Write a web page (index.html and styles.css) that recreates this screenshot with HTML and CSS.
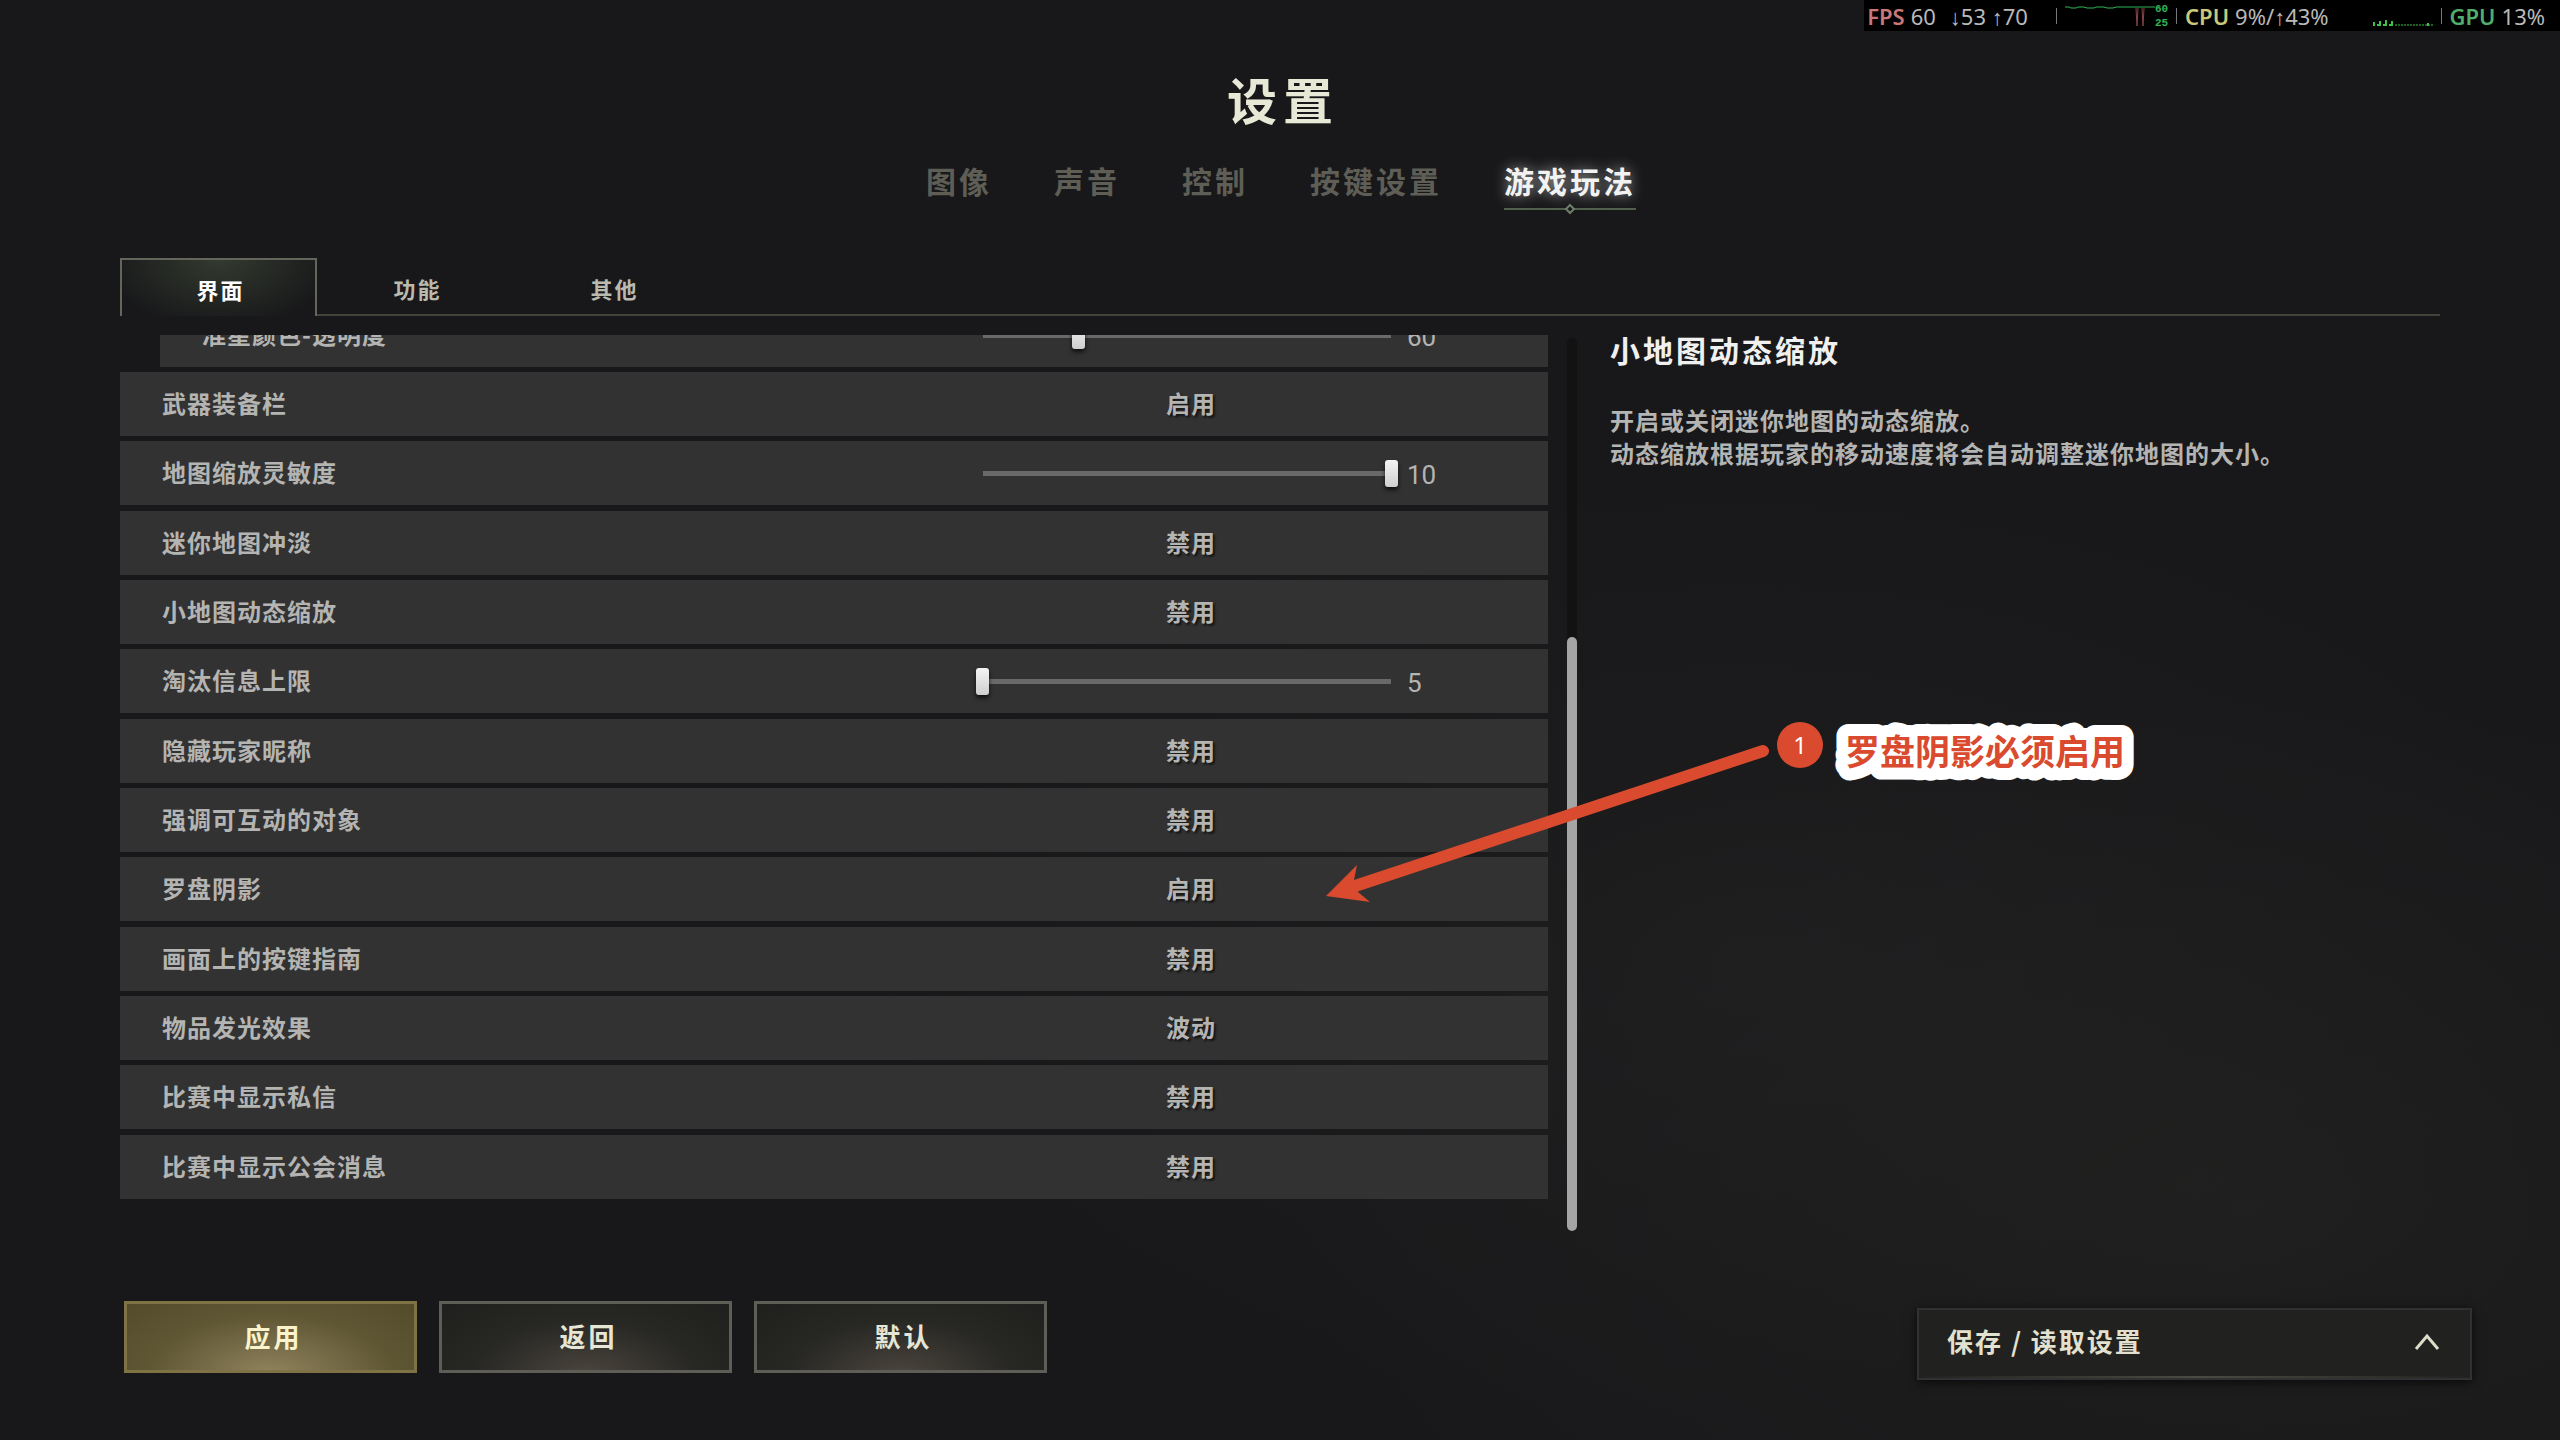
FILE: index.html
```
<!DOCTYPE html>
<html lang="zh-CN">
<head>
    <meta charset="UTF-8">
    <meta name="viewport" content="width=device-width, initial-scale=1.0">
    <title>设置</title>
    <link rel="stylesheet" href="styles.css">
</head>
<body>
    <!-- Performance overlay -->
    <div class="hud">
        <b class="fps">FPS</b><span class="fps-now">60</span>
        <span class="fps-range">↓53 ↑70</span>
        <i class="bar"></i>
        <svg class="fps-graph" width="90" height="26" viewBox="0 0 90 26">
            <path d="M0 4h4l2 1h5l2-1h6l3 1h7l2-1h8l3 1h6l3-1h39" fill="none" stroke="#2fb457" stroke-width="1"/>
            <path d="M71 5l1 18l1-18M77 5l1 18l1-18" fill="none" stroke="#8a4444" stroke-width="1"/>
        </svg>
        <span class="scale"><span>60</span><span>25</span></span>
        <i class="bar"></i>
        <b class="cpu">CPU</b><span class="cpu-now">9%/↑43%</span>
        <svg class="cpu-graph" width="60" height="26" viewBox="0 0 60 26">
            <path d="M1 23v-4M5 23v-2M7 23v-5M11 23v-2M13 23v-6M17 23v-2M19 23v-5M55 23v-3" fill="none" stroke="#3fc04a" stroke-width="2"/>
            <path d="M22 22h38" fill="none" stroke="#3fc04a" stroke-width="1" stroke-dasharray="2 1"/>
        </svg>
        <i class="bar"></i>
        <b class="gpu">GPU</b><span class="gpu-now">13%</span>
    </div>

    <header>
        <h1>设置</h1>
        <nav>
            <a href="#">图像</a>
            <a href="#">声音</a>
            <a href="#">控制</a>
            <a href="#">按键设置</a>
            <a href="#" class="active">游戏玩法
                <svg width="14" height="12" viewBox="0 0 14 12"><path d="M7 2l4 4l-4 4l-4-4z" fill="#18181a" stroke="#6f7d6a" stroke-width="2"/></svg>
            </a>
        </nav>
    </header>

    <main>
        <div class="tabs">
            <button class="tab selected">界面</button>
            <button class="tab">功能</button>
            <button class="tab">其他</button>
        </div>

        <div class="content">
            <div class="scroll">
                <div class="list">
                    <div class="row sub">
                        <label for="alpha">准星颜色-透明度</label>
                        <input type="range" id="alpha" min="0" max="255" value="60">
                        <output for="alpha">60</output>
                    </div>
                    <div class="row">
                        <label for="weapon">武器装备栏</label>
                        <select id="weapon"><option>启用</option><option>禁用</option></select>
                    </div>
                    <div class="row">
                        <label for="mapzoom">地图缩放灵敏度</label>
                        <input type="range" id="mapzoom" min="1" max="10" value="10">
                        <output for="mapzoom">10</output>
                    </div>
                    <div class="row">
                        <label for="fade">迷你地图冲淡</label>
                        <select id="fade"><option>禁用</option><option>启用</option></select>
                    </div>
                    <div class="row">
                        <label for="dynamic">小地图动态缩放</label>
                        <select id="dynamic"><option>禁用</option><option>启用</option></select>
                    </div>
                    <div class="row">
                        <label for="feed">淘汰信息上限</label>
                        <input type="range" id="feed" min="5" max="10" value="5">
                        <output for="feed">5</output>
                    </div>
                    <div class="row">
                        <label for="nick">隐藏玩家昵称</label>
                        <select id="nick"><option>禁用</option><option>启用</option></select>
                    </div>
                    <div class="row">
                        <label for="interact">强调可互动的对象</label>
                        <select id="interact"><option>禁用</option><option>启用</option></select>
                    </div>
                    <div class="row">
                        <label for="compass">罗盘阴影</label>
                        <select id="compass"><option>启用</option><option>禁用</option></select>
                    </div>
                    <div class="row">
                        <label for="keys">画面上的按键指南</label>
                        <select id="keys"><option>禁用</option><option>启用</option></select>
                    </div>
                    <div class="row">
                        <label for="glow">物品发光效果</label>
                        <select id="glow"><option>波动</option><option>禁用</option></select>
                    </div>
                    <div class="row">
                        <label for="whisper">比赛中显示私信</label>
                        <select id="whisper"><option>禁用</option><option>启用</option></select>
                    </div>
                    <div class="row">
                        <label for="clan">比赛中显示公会消息</label>
                        <select id="clan"><option>禁用</option><option>启用</option></select>
                    </div>
                </div>
                <div class="scrollbar"><div class="thumb"></div></div>
            </div>

            <aside>
                <h2>小地图动态缩放</h2>
                <p>开启或关闭迷你地图的动态缩放。<br>动态缩放根据玩家的移动速度将会自动调整迷你地图的大小。</p>
            </aside>
        </div>
    </main>

    <footer>
        <div class="actions">
            <button class="btn apply">应用</button>
            <button class="btn">返回</button>
            <button class="btn">默认</button>
        </div>
        <button class="preset">
            <span>保存 / 读取设置</span>
            <svg width="26" height="18" viewBox="0 0 26 18"><path d="M2 16L13 3l11 13" fill="none" stroke="#deddcb" stroke-width="3"/></svg>
        </button>
    </footer>

    <!-- Callout drawn over the page -->
    <svg class="callout" width="820" height="200" viewBox="1320 710 820 200">
        <path d="M1763 751L1352 887" stroke="#d94a2e" stroke-width="12" stroke-linecap="round"/>
        <path d="M1326 896L1357 865L1354 880L1358 892L1370 902Z" fill="#d94a2e"/>
        <circle cx="1800" cy="745" r="23" fill="#d94a2e"/>
        <text x="1800" y="754" class="num">1</text>
        <text x="1845" y="765" class="note">罗盘阴影必须启用</text>
    </svg>
</body>
</html>
```
FILE: styles.css
```
* {
    box-sizing: border-box;
}

body {
    margin: 0;
    position: relative;
    min-height: 100vh;
    padding-top: 68px;
    overflow: hidden;
    font-family: "Noto Sans CJK SC", sans-serif;
    font-size: 24px;
    font-weight: 700;
    letter-spacing: 1px;
    color: #b4b4b3;
    background-color: #18181a;
    background-image:
        radial-gradient(ellipse at 88% 84%, rgba(60, 57, 50, 0.2), transparent 30%),
        radial-gradient(ellipse at 68% 66%, rgba(50, 50, 48, 0.2), transparent 35%);
}

button, select, input {
    margin: 0;
    font: inherit;
    letter-spacing: inherit;
    color: inherit;
    cursor: pointer;
}

/* Performance overlay */
.hud {
    position: absolute;
    top: 0;
    right: 0;
    display: flex;
    align-items: center;
    height: 31px;
    padding: 0 15px 0 3px;
    background: #000;
    color: #b9b9b9;
    font-family: "Noto Sans", sans-serif;
    font-size: 22px;
    font-weight: 400;
    letter-spacing: 0;
    white-space: nowrap;
}

.hud b {
    font-weight: 600;
    margin-right: 6px;
}

.fps { color: #c87878; }
.cpu { color: #c8c87a; }
.gpu { color: #4fae6c; }

.fps-now {
    margin-right: 14px;
}

.bar {
    width: 1px;
    height: 16px;
    margin: 0 8px;
    background: #777;
}

.fps-range {
    margin-right: 20px;
}

.cpu-now {
    margin-right: 44px;
}

.scale {
    display: flex;
    flex-direction: column;
    color: #2fb457;
    font-family: "Liberation Mono", monospace;
    font-size: 11px;
    line-height: 14px;
    font-weight: 700;
}

/* Header */
header {
    text-align: center;
}

h1 {
    margin: 0 0 32px;
    padding-left: 6px;
    font-size: 50px;
    line-height: 60px;
    font-weight: 700;
    letter-spacing: 6px;
    color: #e8e8d6;
}

nav {
    display: flex;
    justify-content: center;
    gap: 62px;
    padding-left: 2px;
}

nav a {
    position: relative;
    height: 50px;
    font-size: 30px;
    line-height: 40px;
    letter-spacing: 3px;
    color: #5e5e56;
    text-decoration: none;
}

nav a.active {
    color: #f2f2f2;
    border-bottom: 2px solid #4f5f4c;
    text-shadow: 0 0 14px rgba(255, 255, 255, 0.6);
}

nav a svg {
    position: absolute;
    left: calc(50% - 7px);
    bottom: -7px;
}

/* Tabs */
main {
    padding: 48px 120px 0;
}

.tabs {
    display: flex;
    background: linear-gradient(#42433b, #42433b) bottom / 100% 2px no-repeat;
}

.tab {
    width: 197px;
    height: 58px;
    padding: 2px 0 0 4px;
    border: 0;
    background: none;
    font-size: 22px;
    letter-spacing: 2px;
    color: #b9b9ae;
}

.tab.selected {
    border: 2px solid #63665a;
    border-bottom: 0;
    background: radial-gradient(ellipse at 50% 0, #333a2f, #18181a 85%) #18181a;
    color: #fff;
}

/* Settings list */
.content {
    display: grid;
    grid-template-columns: 1457fr 830fr;
    gap: 33px;
    margin-top: 19px;
}

.scroll {
    display: flex;
    gap: 19px;
    overflow: hidden;
}

.list {
    flex: 1;
    margin-top: -32px; /* scrolled past half of the first row */
    padding-bottom: 32px;
}

.row {
    display: grid;
    grid-template-columns: 863fr 408fr 157fr;
    align-items: center;
    height: 64px;
    margin-bottom: 5px;
    background: #323232;
}

.row:nth-child(3n) {
    margin-bottom: 6px;
}

.row:last-child {
    margin-bottom: 0;
}

.row.sub {
    grid-template-columns: 823fr 408fr 157fr;
    margin-left: 40px;
}

.row label {
    padding: 0 0 4px 42px;
}

.row select {
    appearance: none;
    height: 40px;
    padding: 0 0 4px 8px;
    border: 0;
    background: none;
    text-align: center;
    text-align-last: center;
    text-shadow: 2px 2px 2px rgba(0, 0, 0, 0.6);
}

.row select option {
    background: #323232;
}

.row input {
    appearance: none;
    height: 27px;
    margin: 0 -7px;
    background: linear-gradient(#696969, #696969) center / calc(100% - 14px) 5px no-repeat;
}

.row input::-webkit-slider-thumb {
    appearance: none;
    width: 13px;
    height: 27px;
    border-radius: 3px;
    background: linear-gradient(#f4f4f4, #cfcfcf);
    box-shadow: 0 3px 4px rgba(0, 0, 0, 0.7);
}

.row output {
    padding: 4px 0 0 16px;
    font-family: Roboto, sans-serif;
    font-size: 26px;
    line-height: 32px;
    font-weight: 400;
    letter-spacing: 0;
}

.scrollbar {
    display: flex;
    align-items: flex-end;
    width: 10px;
    margin-top: 3px;
    border-radius: 5px;
    background: #121213;
}

.thumb {
    width: 10px;
    height: 66.5%;
    border-radius: 5px;
    background: #a5a5a5;
}

/* Description */
aside {
    margin-top: -3px;
}

h2 {
    margin: 0 0 37px;
    font-size: 30px;
    line-height: 34px;
    font-weight: 700;
    letter-spacing: 3px;
    color: #f0f0f0;
}

aside p {
    margin: 0;
    line-height: 33px;
}

/* Footer */
footer {
    display: flex;
    justify-content: space-between;
    align-items: flex-start;
    padding: 70px 88px 0 124px;
}

.actions {
    display: flex;
    gap: 22px;
}

.btn {
    width: 293px;
    height: 72px;
    padding: 0 0 4px 6px;
    border: 3px solid #5e5e56;
    background: radial-gradient(ellipse at 50% 110%, #4c463e, #272724 55%, #1f1f1d 100%);
    font-size: 26px;
    letter-spacing: 3px;
    color: #e6e6d6;
}

.btn.apply {
    border-color: #7f7346;
    background: radial-gradient(ellipse at 50% 110%, #92855f, #5f5634 60%, #544b2b 100%);
    color: #fbf3cc;
}

.preset {
    display: flex;
    justify-content: space-between;
    align-items: center;
    width: 555px;
    height: 72px;
    margin-top: 7px;
    padding: 0 30px 4px 28px;
    border: 2px solid #303132;
    background: linear-gradient(90deg, transparent, #4b4b44, transparent) bottom / 100% 2px no-repeat #21211f;
    box-shadow: 0 2px 10px rgba(0, 0, 0, 0.7);
    font-size: 26px;
    letter-spacing: 2px;
    color: #e2e1d0;
}

.preset span {
    padding-bottom: 4px;
}

/* Callout */
.callout {
    position: absolute;
    left: 1320px;
    top: 710px;
    pointer-events: none;
}

.num {
    font-family: "Noto Sans", sans-serif;
    font-size: 24px;
    font-weight: 400;
    letter-spacing: 0;
    text-anchor: middle;
    fill: #fff;
}

.note {
    font-size: 35px;
    font-weight: 700;
    letter-spacing: 0;
    fill: #d94a2e;
    stroke: #fff;
    stroke-width: 24px;
    stroke-linejoin: round;
    paint-order: stroke;
}
```
